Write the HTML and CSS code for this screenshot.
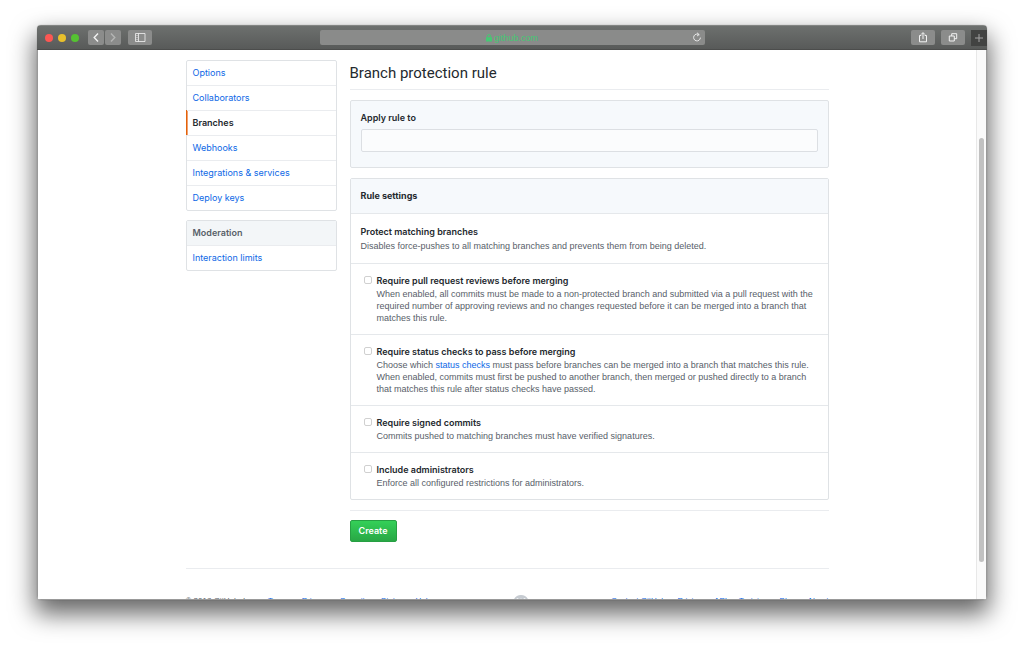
FILE: index.html
```html
<!DOCTYPE html>
<html lang="en">
<head>
<meta charset="utf-8">
<meta name="viewport" content="width=device-width, initial-scale=1">
<title>Branch protection rule</title>
<link rel="stylesheet" href="styles.css">
</head>
<body>
<div class="window">
  <header class="toolbar">
    <div class="tools">
      <span class="lights"><i class="light red"></i><i class="light yellow"></i><i class="light green"></i></span>
      <span class="history">
        <button class="tool narrow" type="button" aria-label="Back"><svg width="16" height="15" viewBox="0 0 16 15"><path d="M10 3.5 6.2 7.5 10 11.5"/></svg></button>
        <button class="tool narrow dim" type="button" aria-label="Forward"><svg width="16" height="15" viewBox="0 0 16 15"><path d="M6 3.5 9.8 7.5 6 11.5"/></svg></button>
      </span>
      <button class="tool" type="button" aria-label="Show sidebar"><svg class="thin" width="24" height="15" viewBox="0 0 24 15"><path d="M7.5 3.5h9.500v8h-9.500zM10.500 3.500v8M8.500 5.500h1M8.500 7.500h1M8.500 9.500h1"/></svg></button>
    </div>
    <div class="address">
      <span class="host"><svg width="6" height="8" viewBox="0 0 6 8"><path class="lock" d="M0 3.300h6v4.200H0z"/><path class="shackle" d="M1.300 3.500V2.300a1.700 1.700 0 0 1 3.400 0v1.200"/></svg>github.com</span>
      <button class="reload" type="button" aria-label="Reload"><svg width="10" height="11" viewBox="0 0 10 11"><path d="M7.200 2.900A3.400 3.400 0 1 0 8.400 5.600M5 .8 7.200 2.600 5 4"/></svg></button>
    </div>
    <div class="tools end">
      <button class="tool" type="button" aria-label="Share"><svg width="24" height="15" viewBox="0 0 24 15"><path d="M10.300 5.500H8.500v6.300h7V5.500h-1.800M12 9V2.800M10 4.600l2-2 2 2"/></svg></button>
      <button class="tool" type="button" aria-label="Show tabs"><svg width="24" height="15" viewBox="0 0 24 15"><path d="M8.300 6h5v5h-5zM10.700 6V3.700h5v5h-2.400"/></svg></button>
      <button class="new-tab" type="button" aria-label="New tab"><svg width="16" height="16" viewBox="0 0 16 16"><path d="M4 8h8M8 4v8"/></svg></button>
    </div>
  </header>
  <div class="viewport">
    <div class="page">
      <div class="columns">
        <aside class="side">
          <nav class="menu" aria-label="Settings">
            <a href="#">Options</a>
            <a href="#">Collaborators</a>
            <a href="#" class="selected" aria-current="page">Branches</a>
            <a href="#">Webhooks</a>
            <a href="#">Integrations &amp; services</a>
            <a href="#">Deploy keys</a>
          </nav>
          <nav class="menu" aria-label="Moderation">
            <h2 class="menu-title">Moderation</h2>
            <a href="#">Interaction limits</a>
          </nav>
        </aside>
        <main class="main">
          <h1 class="title">Branch protection rule</h1>
          <form class="form">
            <div class="box apply">
              <label for="rule">Apply rule to</label>
              <input class="field" id="rule" type="text">
            </div>
            <section class="box">
              <h2 class="box-title">Rule settings</h2>
              <div class="row intro">
                <h3>Protect matching branches</h3>
                <p>Disables force-pushes to all matching branches and prevents them from being deleted.</p>
              </div>
              <div class="row option">
                <input type="checkbox" id="reviews">
                <div><label for="reviews">Require pull request reviews before merging</label>
                <p>When enabled, all commits must be made to a non-protected branch and submitted via a pull request with the required number of approving reviews and no changes requested before it can be merged into a branch that matches this rule.</p></div>
              </div>
              <div class="row option">
                <input type="checkbox" id="checks">
                <div><label for="checks">Require status checks to pass before merging</label>
                <p>Choose which <a href="#">status checks</a> must pass before branches can be merged into a branch that matches this rule. When enabled, commits must first be pushed to another branch, then merged or pushed directly to a branch that matches this rule after status checks have passed.</p></div>
              </div>
              <div class="row option">
                <input type="checkbox" id="signed">
                <div><label for="signed">Require signed commits</label>
                <p>Commits pushed to matching branches must have verified signatures.</p></div>
              </div>
              <div class="row option">
                <input type="checkbox" id="admins">
                <div><label for="admins">Include administrators</label>
                <p>Enforce all configured restrictions for administrators.</p></div>
              </div>
            </section>
            <div class="actions"><button class="create" type="submit">Create</button></div>
          </form>
        </main>
      </div>
      <footer class="footer">
        <div class="links"><span>© 2018 GitHub, Inc.</span><a href="#">Terms</a><a href="#">Privacy</a><a href="#">Security</a><a href="#">Status</a><a href="#">Help</a></div>
        <svg class="mark" width="16" height="16" viewBox="0 0 16 16" role="img" aria-label="GitHub"><path fill-rule="evenodd" d="M8 0C3.580 0 0 3.580 0 8c0 3.540 2.290 6.530 5.470 7.590.4.070.55-.17.55-.38 0-.19-.01-.82-.01-1.490-2.010.37-2.530-.49-2.690-.94-.09-.23-.48-.94-.82-1.130-.28-.15-.68-.52-.01-.53.63-.01 1.080.58 1.230.82.72 1.210 1.870.87 2.330.66.07-.52.28-.87.51-1.070-1.780-.2-3.640-.89-3.640-3.950 0-.87.31-1.590.82-2.150-.08-.2-.36-1.020.08-2.120 0 0 .67-.21 2.200.82.64-.18 1.320-.27 2-.27s1.360.09 2 .27c1.530-1.040 2.200-.82 2.200-.82.44 1.100.16 1.920.08 2.120.51.56.82 1.270.82 2.150 0 3.070-1.870 3.750-3.650 3.950.29.25.54.73.54 1.480 0 1.070-.01 1.930-.01 2.200 0 .21.15.46.55.38A8.010 8.010 0 0 0 16 8c0-4.420-3.580-8-8-8z"/></svg>
        <div class="links"><a href="#">Contact GitHub</a><a href="#">Pricing</a><a href="#">API</a><a href="#">Training</a><a href="#">Blog</a><a href="#">About</a></div>
      </footer>
    </div>
    <div class="track"><div class="thumb"></div></div>
  </div>
</div>
</body>
</html>
```
FILE: styles.css
```css
* { box-sizing: border-box; }
body {
  margin: 0;
  padding: 25px 37px 48px;
  height: 100vh;
  overflow: hidden;
  background: #fff;
  color: #24292e;
  font: 9px/12px Inter, "Liberation Sans", sans-serif;
}
h1, h2, h3, p { margin: 0; font-size: inherit; }
a { color: #0d68e6; text-decoration: none; }
button { font: inherit; padding: 0; border: 0; cursor: pointer; }
svg { display: block; fill: none; stroke: currentColor; }

.window {
  height: 100%;
  display: flex;
  flex-direction: column;
  overflow: hidden;
  border-radius: 4px;
  background: #fff;
  box-shadow: 0 0 1px rgba(0, 0, 0, .4), 0 12px 24px 2px rgba(0, 0, 0, .6);
}
.toolbar {
  flex: none;
  height: 25px;
  display: grid;
  grid-template-columns: 1fr minmax(0, 385px) 1fr;
  align-items: center;
  background: linear-gradient(#6d706e, #585a59);
  border-top: 1px solid #838583;
  border-bottom: 1px solid #4c4d4c;
}
.tools { display: flex; align-items: center; gap: 7px; padding-left: 8px; }
.lights { display: flex; gap: 5px; margin-right: 2px; }
.light { width: 8px; height: 8px; border-radius: 50%; }
.red { background: #fc5753; }
.yellow { background: #e8c02c; }
.green { background: #55c232; }
.history { display: flex; gap: 1px; }
.tool {
  width: 24px;
  height: 15px;
  border-radius: 2px;
  background: #8b8c8b;
  color: #f2f2f2;
}
.narrow { width: 16px; }
.narrow svg { stroke-width: 1.4; }
.dim { color: #b4b5b4; }
.thin { stroke-width: .8; }
.address {
  height: 15px;
  display: grid;
  grid-template-columns: 1fr auto 1fr;
  align-items: center;
  border-radius: 2px;
  background: #8a8b8a;
}
.host { grid-column: 2; display: flex; align-items: center; gap: 2px; color: #45c873; font-family: "Liberation Sans", sans-serif; }
.lock { fill: currentColor; stroke: none; }
.reload { justify-self: end; margin-right: 3px; background: none; color: #e6e6e6; }
.end { gap: 6px; padding: 0; justify-content: flex-end; }
.new-tab { width: 16px; height: 16px; align-self: flex-end; background: #424342; color: #a5a5a5; }

.viewport { flex: 1; min-height: 0; display: flex; border: solid #999; border-width: 0 1px 1px; }
.page { flex: 1; min-width: 0; overflow: hidden; padding: 10px 16px 0; }
.track { width: 10px; padding-top: 88px; background: #fafafa; border-left: 1px solid #e8e8e8; }
.thumb { width: 5px; height: 92%; margin-left: 2px; border-radius: 3px; background: #c1c1c1; }

.columns { max-width: 643px; margin: 0 auto; display: grid; grid-template-columns: 151px minmax(0, 1fr); gap: 13px; }
.side { display: flex; flex-direction: column; gap: 9px; }
.menu { border: 1px solid #dfe2e5; border-radius: 2px; }
.menu a, .menu-title { display: block; padding: 6px; font-weight: 400; }
.menu > * + * { border-top: 1px solid #eaecef; }
.menu .selected { color: #24292e; font-weight: 600; box-shadow: inset 1px 0 #f0a070, -1px 0 #e36209; }
.menu .menu-title { background: #f3f6f8; color: #586069; font-weight: 600; }

.title { padding-bottom: 3px; border-bottom: 1px solid #eaecef; font: 400 15px/26px Roboto, sans-serif; }
.form { padding-top: 10px; }
.box { border: 1px solid #dfe2e5; border-radius: 2px; margin-bottom: 10px; }
.apply { display: flex; flex-direction: column; gap: 5px; padding: 11px 10px 15px; background: #f6f9fc; font-weight: 600; }
.field { height: 23px; padding: 0 5px; border: 1px solid #dcdfe3; border-radius: 2px; background: #fbfcfd; font: inherit; }
.box-title { padding: 11px 10px; background: #f6f9fc; }
.row { padding: 11px 10px 10px; border-top: 1px solid #e5e8eb; }
.row h3, .row label { display: block; margin-bottom: 1px; font-weight: 600; }
.row p { color: #586069; font-family: "Liberation Sans", sans-serif; }
.intro { padding: 12px 10px 11px; }
.intro h3 { margin-bottom: 2px; }
.option { display: flex; gap: 5px; padding-left: 13px; }
.option input {
  flex: none;
  appearance: none;
  width: 8px;
  height: 8px;
  margin: 1px 0 0;
  border: 1px solid #d0d0d0;
  border-radius: 2px;
  background: #fff;
}
.actions { padding-top: 9px; border-top: 1px solid #eaecef; }
.create {
  height: 22px;
  padding: 0 8px;
  border: 1px solid #279f43;
  border-radius: 2px;
  background: linear-gradient(#34d058, #28a745);
  color: #fff;
  font-weight: 600;
}
.footer {
  max-width: 643px;
  margin: 26px auto 0;
  padding-top: 26px;
  display: flex;
  justify-content: space-between;
  border-top: 1px solid #eaecef;
}
.links { display: flex; gap: 12px; color: #586069; white-space: nowrap; font-size: 8px; font-family: "Liberation Sans", sans-serif; }
.mark { fill: #c6cbd1; stroke: none; }
```
